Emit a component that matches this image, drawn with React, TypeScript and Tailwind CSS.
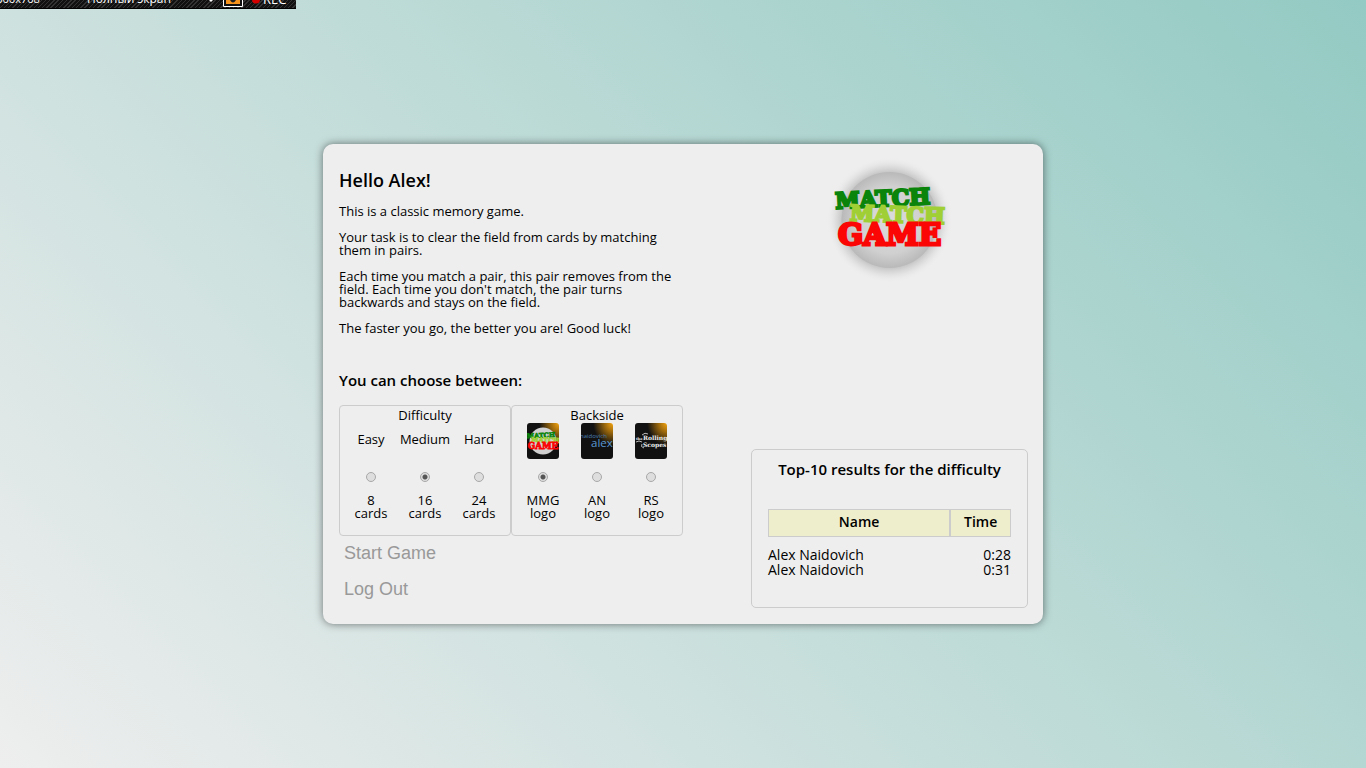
import { useState } from 'react';
import type { ReactNode } from 'react';

type Option = { value: string; top: ReactNode; caption: [string, string] };

const slab = "'DejaVu Serif', serif";

function WordMark() {
  return (
    <g fontFamily={slab} fontWeight="700" strokeLinejoin="miter">
      <g transform="rotate(-3 70 45)">
        <text x="25" y="56.5" fontSize="22" fill="#0a840a" stroke="#0a840a" strokeWidth="2.4">MATCH</text>
      </g>
      <g transform="rotate(2 90 65)">
        <text x="40" y="72.5" fontSize="22" fill="#a0cf35" stroke="#a0cf35" strokeWidth="2.2">MATCH</text>
      </g>
      <text x="28" y="95" fontSize="29.5" fill="#fb0505" stroke="#fb0505" strokeWidth="2.8">GAME</text>
    </g>
  );
}

function GameLogo() {
  return (
    <svg viewBox="0 0 160 140" className="h-[140px] w-40" role="img" aria-label="Match Match Game">
      <defs>
        <radialGradient id="halo">
          <stop offset="0.7" stopColor="#777" stopOpacity="0.5" />
          <stop offset="0.85" stopColor="#aaa" stopOpacity="0.25" />
          <stop offset="1" stopColor="#eee" stopOpacity="0" />
        </radialGradient>
        <radialGradient id="globe">
          <stop offset="0" stopColor="#dcdcdc" />
          <stop offset="0.7" stopColor="#d0d0d0" />
          <stop offset="1" stopColor="#b9b9b9" />
        </radialGradient>
      </defs>
      <circle cx="79.5" cy="70" r="63" fill="url(#halo)" />
      <circle cx="79.5" cy="70" r="48" fill="url(#globe)" />
      <WordMark />
    </svg>
  );
}

function CardBack({ children, id }: { children: ReactNode; id: string }) {
  return (
    <svg viewBox="0 0 32 36" className="h-9 w-8 rounded-[3px]" aria-hidden="true">
      <defs>
        <radialGradient id={id} cx="1" cy="0" r="0.62">
          <stop offset="0" stopColor="#f5a510" />
          <stop offset="0.4" stopColor="#a06b0c" />
          <stop offset="1" stopColor="#111" />
        </radialGradient>
      </defs>
      <rect width="32" height="36" fill={`url(#${id})`} />
      {children}
    </svg>
  );
}

const difficulties: Option[] = [
  { value: 'easy', top: 'Easy', caption: ['8', 'cards'] },
  { value: 'medium', top: 'Medium', caption: ['16', 'cards'] },
  { value: 'hard', top: 'Hard', caption: ['24', 'cards'] },
];

const backsides: Option[] = [
  {
    value: 'mmg',
    top: (
      <CardBack id="glow-mmg">
        <circle cx="16" cy="18" r="13.5" fill="#d0d0d0" />
        <g transform="translate(-7.5 -2) scale(0.295)">
          <WordMark />
        </g>
      </CardBack>
    ),
    caption: ['MMG', 'logo'],
  },
  {
    value: 'an',
    top: (
      <CardBack id="glow-an">
        <text x="-1" y="15" fontSize="6" fontFamily="'Open Sans', sans-serif" fill="#4a7fb3">naidovich</text>
        <text x="10" y="24" fontSize="11.5" fontFamily="'Open Sans', sans-serif" fill="#5a97d2">alex</text>
      </CardBack>
    ),
    caption: ['AN', 'logo'],
  },
  {
    value: 'rs',
    top: (
      <CardBack id="glow-rs">
        <g fontFamily={slab} fontWeight="700" fill="#eee">
          <text x="1" y="17" fontSize="3.5">the</text>
          <text x="8" y="17" fontSize="6">Rolling</text>
          <text x="8" y="23.5" fontSize="6">Scopes</text>
        </g>
        <path d="M1 19q3-2 6 0M7 12q3-3 6-1M7 21q-2 3 2 4" stroke="#ccc" strokeWidth="0.9" fill="none" />
      </CardBack>
    ),
    caption: ['RS', 'logo'],
  },
];

function Choice({ title, name, options, initial }: { title: string; name: string; options: Option[]; initial: string }) {
  const [value, setValue] = useState(initial);
  return (
    <fieldset className="min-w-0 flex-1 rounded border border-[#ccc] px-1 pt-[3px] pb-[15px]">
      <legend className="float-left mb-px w-full text-center">{title}</legend>
      <div className="clear-both grid grid-cols-3">
        {options.map((o) => (
          <label key={o.value} className="flex flex-col items-center text-center">
            <span className="flex h-9 items-center">
              {typeof o.top === 'string' ? <span className="pb-[3px]">{o.top}</span> : o.top}
            </span>
            <input
              type="radio"
              name={name}
              value={o.value}
              checked={value === o.value}
              onChange={() => setValue(o.value)}
              className="mt-[13px] mb-3 size-[10px] appearance-none rounded-full border border-[#a8a8a8] bg-[#dedede] checked:bg-[radial-gradient(circle,#555_2px,#dedede_3px)]"
            />
            <span>{o.caption[0]}</span>
            <span>{o.caption[1]}</span>
          </label>
        ))}
      </div>
    </fieldset>
  );
}

function RecorderBar() {
  return (
    <div className="absolute top-0 left-0 flex h-[9px] w-[296px] items-end overflow-hidden border-b border-black bg-[repeating-linear-gradient(135deg,#111_0px,#111_2px,#333_2px,#333_3px)] font-['Open_Sans',sans-serif] text-[12px] leading-[18px] text-white">
      <span className="-ml-2.5 w-[97px] shrink-0 text-[11px]">1366x768</span>
      <span className="w-[121px] shrink-0">Полный экран</span>
      <svg viewBox="0 0 15 8" className="h-2 w-[15px] shrink-0" aria-hidden="true">
        <path d="M0 -1h6l-3 3z" fill="#fff" />
      </svg>
      <svg viewBox="0 0 20 8" className="h-2 w-5 shrink-0" aria-hidden="true">
        <path d="M.5 0v6.5h19V0" fill="#111" stroke="#fff" />
        <path d="M3 0h14v4H3z" fill="#f7941d" />
        <path d="M7 0q3 5 6 0" fill="#222" />
      </svg>
      <svg viewBox="0 0 12 8" className="ml-2 h-2 w-3 shrink-0" aria-hidden="true">
        <circle cx="5" cy="-.5" r="4" fill="#d40000" />
      </svg>
      <span className="text-[13px]">REC</span>
    </div>
  );
}

const results = [
  { name: 'Alex Naidovich', time: '0:28' },
  { name: 'Alex Naidovich', time: '0:31' },
];

export default function App() {
  return (
    <div className="flex min-h-screen items-center justify-center bg-[linear-gradient(45deg,#eee,#93cac3)] font-['Open_Sans','Noto_Sans',sans-serif] text-[13px] leading-[13px] text-black">
      <RecorderBar />
      <main className="flex w-full max-w-[720px] justify-between rounded-[10px] bg-[#eee] pr-[15px] pb-4 pl-4 shadow-[0_0_8px_rgba(0,0,0,0.5)]">
        <section className="w-[344px] pt-[26px]">
          <h1 className="text-[18px] leading-5 font-semibold">Hello Alex!</h1>
          <div className="mt-[15px] flex flex-col gap-[13px]">
            <p>This is a classic memory game.</p>
            <p>Your task is to clear the field from cards by matching<br />them in pairs.</p>
            <p>Each time you match a pair, this pair removes from the<br />field. Each time you don't match, the pair turns<br />backwards and stays on the field.</p>
            <p>The faster you go, the better you are! Good luck!</p>
          </div>
          <h2 className="mt-[37px] text-[15px] leading-4 font-semibold">You can choose between:</h2>
          <form className="mt-[17px]" onSubmit={(e) => e.preventDefault()}>
            <div className="flex">
              <Choice title="Difficulty" name="difficulty" options={difficulties} initial="medium" />
              <Choice title="Backside" name="backside" options={backsides} initial="mmg" />
            </div>
            <div className="flex flex-col items-start font-['Liberation_Sans',Arial,sans-serif] text-[18px] text-[#999]">
              <button type="submit" className="h-9 px-[5px] pb-0.5">Start Game</button>
              <button type="button" className="h-9 px-[5px] pb-0.5">Log Out</button>
            </div>
          </form>
        </section>
        <section className="flex w-[277px] flex-col items-center justify-between pt-[6px]">
          <GameLogo />
          <div className="w-full rounded-[5px] border border-[#ccc] px-4 pt-[11px] pb-[30px]">
            <h2 className="text-center text-[15px] leading-4 font-semibold">Top-10 results for the difficulty</h2>
            <table className="mt-8 w-full border-separate border-spacing-0 text-[14px] leading-[15px]">
              <thead>
                <tr className="h-7 bg-[#eeeecc]">
                  <th scope="col" className="w-3/4 border border-[#ccc] pb-1 font-semibold">Name</th>
                  <th scope="col" className="border border-[#ccc] pb-1 font-semibold">Time</th>
                </tr>
              </thead>
              <tbody className="before:block before:h-[10px]">
                {results.map((r) => (
                  <tr key={r.time}>
                    <td className="p-0">{r.name}</td>
                    <td className="p-0 text-right">{r.time}</td>
                  </tr>
                ))}
              </tbody>
            </table>
          </div>
        </section>
      </main>
    </div>
  );
}
